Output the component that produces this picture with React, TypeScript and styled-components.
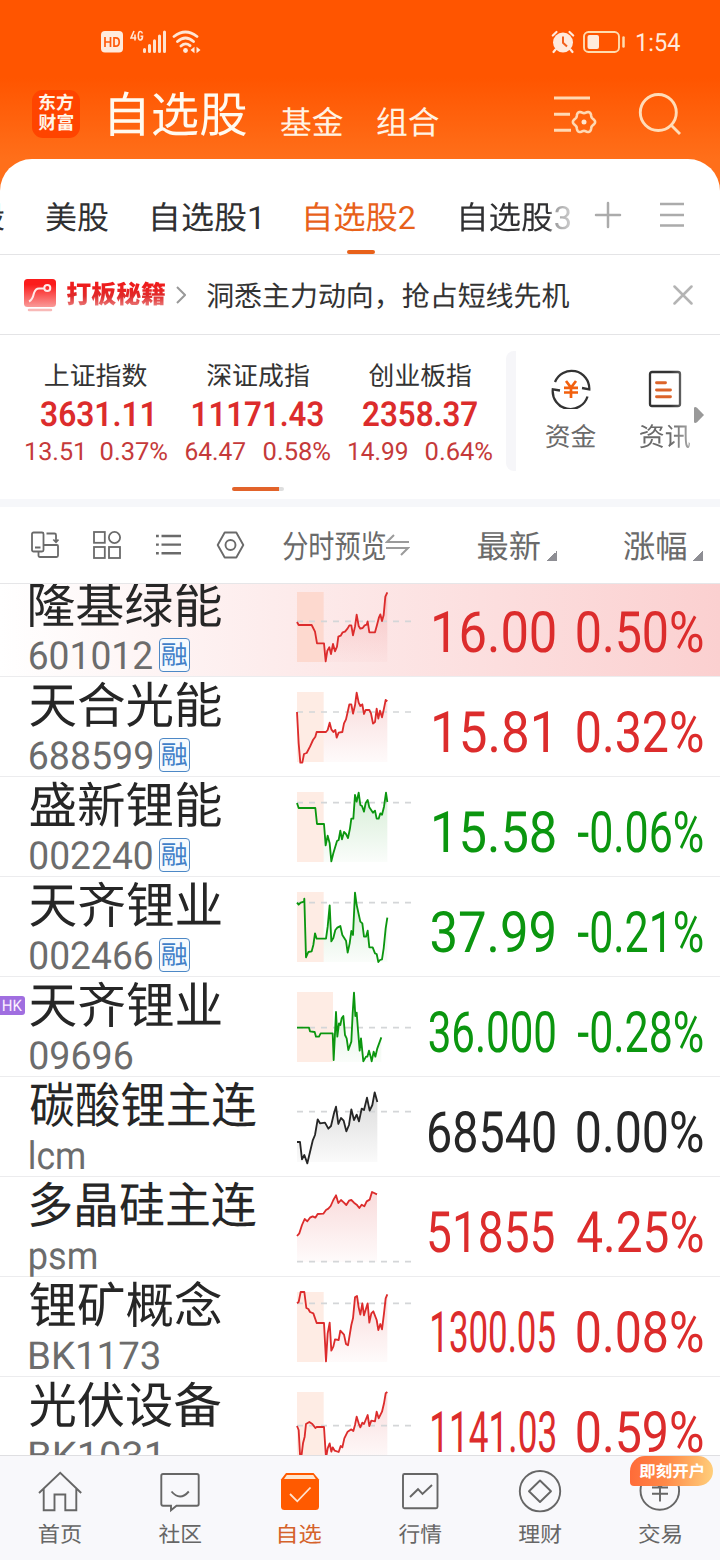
import React, { useLayoutEffect, useRef, useState } from "react";
import styled, { createGlobalStyle } from "styled-components";

const GlobalStyle = createGlobalStyle`
  * { box-sizing: border-box; }
  html, body { margin: 0; padding: 0; }
  body {
    width: 720px;
    background: #fff;
    font-family: Roboto, "Noto Sans CJK SC", sans-serif;
    text-rendering: geometricPrecision;
    overflow: hidden;
  }
  svg { display: block; flex: none; }
`;

/* ---------- text fitted to a column width ---------- */

const FitBox = styled.span<{ $w: number; $h: number; $size: number; $weight?: number; $color?: string }>`
  display: block;
  flex: none;
  width: ${(p) => p.$w}px;
  height: ${(p) => p.$h}px;
  line-height: ${(p) => p.$h}px;
  font-size: ${(p) => p.$size}px;
  font-weight: ${(p) => p.$weight ?? 400};
  color: ${(p) => p.$color ?? "inherit"};
  white-space: pre;
`;

const FitInner = styled.span`
  display: inline-block;
  transform-origin: 0 50%;
`;

type FitProps = {
  w: number;
  h: number;
  size: number;
  weight?: number;
  color?: string;
  className?: string;
  children: string;
};

/* Glyph bounds come back rounded, so they are measured at ten times the size. */
const MEASURE_SCALE = 10;

function Fit({ w, h, size, weight, color, className, children }: FitProps) {
  const ref = useRef<HTMLSpanElement>(null);
  const [transform, setTransform] = useState("none");
  useLayoutEffect(() => {
    const el = ref.current;
    const ctx = document.createElement("canvas").getContext("2d");
    if (!el || !ctx) return;
    const cs = getComputedStyle(el);
    ctx.font = `${cs.fontWeight} ${size * MEASURE_SCALE}px ${cs.fontFamily}`;
    const m = ctx.measureText(children);
    const left = m.actualBoundingBoxLeft / MEASURE_SCALE;
    const ink = left + m.actualBoundingBoxRight / MEASURE_SCALE;
    if (ink <= 0) return;
    const s = w / ink;
    setTransform(`translateX(${left * s}px) scaleX(${s})`);
  }, [children, w, size, weight]);
  return (
    <FitBox className={className} $w={w} $h={h} $size={size} $weight={weight} $color={color}>
      <FitInner ref={ref} style={{ transform }}>
        {children}
      </FitInner>
    </FitBox>
  );
}

/* ---------- header ---------- */

const Screen = styled.div`
  width: 720px;
  height: 1560px;
  display: flex;
  flex-direction: column;
  overflow: hidden;
  background: #fff;
`;

const Header = styled.header`
  height: 199px;
  flex: none;
  background: linear-gradient(180deg, #ff5500 0, #ff5500 78px, #ff6f1a 159px, #ff6f1a 199px);
  color: #fff3e4;
`;

const StatusBar = styled.div`
  height: 84px;
  padding: 0 40px 0 101px;
  display: flex;
  align-items: center;
`;

const Clock = styled(Fit)`
  margin-top: 3px;
`;

const Spacer = styled.div<{ $w?: number }>`
  flex: ${(p) => (p.$w === undefined ? "1" : "none")};
  width: ${(p) => p.$w ?? 0}px;
`;

const TitleBar = styled.div`
  height: 75px;
  padding: 0 38px 0 32px;
  display: flex;
  align-items: flex-start;
`;

const AppLogo = styled.div`
  width: 48px;
  height: 48px;
  margin: 6px 30px 0 0;
  padding: 4px 0 0 7px;
  border-radius: 11px;
  background: #ff4400;
  color: #fff6ea;
`;

const TitleText = styled(Fit)`
  margin-top: 2px;
`;

const SubTitle = styled(Fit)`
  margin: 16px 0 0 35px;
  & + & { margin-left: 34px; }
`;

const HeaderIcon = styled.div<{ $ml: number }>`
  margin: 9px 0 0 ${(p) => p.$ml}px;
`;

/* ---------- tabs ---------- */

const Sheet = styled.main`
  flex: 1;
  min-height: 0;
  margin-top: -40px;
  border-radius: 32px 32px 0 0;
  background: #fff;
  display: flex;
  flex-direction: column;
  overflow: hidden;
`;

const Tabs = styled.nav`
  height: 96px;
  flex: none;
  border-bottom: 1px solid #e4e4e6;
  display: flex;
  align-items: flex-start;
  color: #303032;
`;

const Tab = styled.div<{ $ml: number; $active?: boolean; $faded?: boolean }>`
  height: 95px;
  margin-left: ${(p) => p.$ml}px;
  padding-top: 37px;
  display: flex;
  flex-direction: column;
  align-items: center;
  justify-content: space-between;
  color: ${(p) => (p.$active ? "#e8611a" : "inherit")};
  ${(p) => p.$faded && "mask-image: linear-gradient(90deg, #000 80%, rgba(0,0,0,.5) 84%, rgba(0,0,0,.25) 100%);"}
  &::after {
    content: "";
    width: 28px;
    height: 4px;
    border-radius: 2px;
    background: ${(p) => (p.$active ? "#e8611a" : "transparent")};
  }
`;

const ClippedTab = styled.div`
  width: 4px;
  height: 80px;
  padding-top: 37px;
  overflow: hidden;
  display: flex;
  justify-content: flex-end;
`;

const TabIcon = styled.div<{ $ml: number }>`
  margin: 42px 0 0 ${(p) => p.$ml}px;
`;

/* ---------- promo ---------- */

const Promo = styled.section`
  height: 80px;
  flex: none;
  padding: 0 27px 0 24px;
  border-bottom: 1px solid #e4e4e6;
  display: flex;
  align-items: center;
  color: #333;
`;

const PromoBrand = styled(Fit)`
  margin: 2px 11px 0 11px;
  span {
    background: linear-gradient(180deg, #ee1c1c 20%, #e02a2a 50%, #ee9a9a 92%);
    background-clip: text;
    -webkit-background-clip: text;
    color: transparent;
  }
`;

const PromoText = styled(Fit)`
  margin-top: 5px;
`;

/* ---------- indices ---------- */

const Indices = styled.section`
  height: 164px;
  flex: none;
  display: flex;
  align-items: flex-start;
`;

const IndexPager = styled.div`
  width: 506px;
  padding: 28px 0 0 15px;
`;

const IndexList = styled.div`
  display: flex;
`;

const IndexCard = styled.div`
  width: 162px;
  display: flex;
  flex-direction: column;
  align-items: center;
`;

const IndexChange = styled.div`
  display: flex;
  gap: 19px;
`;

const PagerTrack = styled.div`
  width: 52px;
  height: 4px;
  margin: 20px 0 0 217px;
  border-radius: 2px;
  background: linear-gradient(90deg, #e2632a 47px, #dedede 47px);
`;

const Divider = styled.div`
  width: 10px;
  height: 120px;
  margin-top: 16px;
  border-radius: 8px 0 0 8px;
  background: #f6f6f9;
`;

const Shortcut = styled.div<{ $ml: number; $faded?: boolean }>`
  width: 50px;
  margin: 34px 0 0 ${(p) => p.$ml}px;
  display: flex;
  flex-direction: column;
  align-items: center;
  gap: 14px;
  color: #6a6a6a;
  ${(p) => p.$faded && "mask-image: linear-gradient(90deg, #000 60%, rgba(0,0,0,.6) 100%);"}
`;

const MoreArrow = styled.div`
  margin: 72px 0 0 4px;
`;

/* ---------- list ---------- */

const Gap = styled.div`
  height: 8px;
  flex: none;
  background: #f6f7fa;
`;

const Toolbar = styled.div`
  height: 77px;
  flex: none;
  padding-left: 31px;
  border-bottom: 1px solid #e6e6e8;
  display: flex;
  align-items: center;
  color: #6a6a6a;
`;

const ColumnLabel = styled(Fit)`
  margin-top: 3px;
`;

const SortMark = styled.i`
  width: 10px;
  height: 10px;
  margin: 21px 0 0 7px;
  background: linear-gradient(135deg, transparent 50%, #8e8e94 50%);
`;

const List = styled.div`
  flex: 1;
  min-height: 0;
  overflow: hidden;
  display: flex;
  flex-direction: column;
`;

const ListBody = styled.div`
  margin-top: -7px;
`;

const Row = styled.div<{ $hot?: boolean }>`
  position: relative;
  height: 100px;
  border-bottom: 1px solid #ececee;
  padding-left: 30px;
  display: flex;
  background: ${(p) => (p.$hot ? "linear-gradient(90deg, #fff 0, #fdecec 38%, #fbd0d0 100%)" : "#fff")};
`;

const NameCell = styled.div`
  width: 266px;
  padding-top: 1px;
`;

const CodeLine = styled.div`
  display: flex;
  align-items: flex-start;
  gap: 7px;
  color: #6c6c6c;
`;

const MarginBadge = styled.span`
  width: 31px;
  height: 34px;
  margin-top: 2px;
  padding: 0 0 0 2px;
  border: 1px solid #4d88c6;
  border-radius: 4px;
  background: #f5fafe;
`;

const MarketTag = styled.span`
  position: absolute;
  left: 0;
  top: 19px;
  width: 25px;
  height: 19px;
  padding: 0 0 0 3px;
  border-radius: 0 3px 3px 0;
  background: #a06ee0;
`;

const ChartCell = styled.div`
  width: 120px;
  padding-top: 13px;
`;

const ValueCell = styled.div<{ $w: number }>`
  width: ${(p) => p.$w}px;
  padding: 26px 0 0;
  display: flex;
  justify-content: flex-end;
`;

/* ---------- bottom nav ---------- */

const BottomNav = styled.nav`
  height: 105px;
  flex: none;
  border-top: 1px solid #dfdfe2;
  background: #f8f8fb;
  display: flex;
`;

const NavItem = styled.div<{ $active?: boolean }>`
  position: relative;
  width: 120px;
  padding-top: 14px;
  display: flex;
  flex-direction: column;
  align-items: center;
  gap: 8px;
  color: ${(p) => (p.$active ? "#d5622a" : "#666")};
`;

const OpenBadge = styled.span`
  position: absolute;
  left: 30px;
  top: 0;
  width: 83px;
  height: 30px;
  padding: 1px 0 0 10px;
  border-radius: 15px 15px 15px 4px;
  background: linear-gradient(95deg, #ff6a38 0%, #ff8a48 45%, #ffd07c 100%);
  color: #fff;
`;

/* ---------- data ---------- */

const RED = "#dc2c2c";
const GREEN = "#0b960f";
const INK = "#262626";

type Stock = {
  name: string;
  nameW: number;
  code: string;
  codeW: number;
  margin?: boolean;
  hk?: boolean;
  hot?: boolean;
  color: string;
  price: string;
  priceW: number;
  priceEnd: number;
  pct: string;
  pctW: number;
  base: number;
  shade: number;
  points: string;
};

const stocks: Stock[] = [
  {
    name: "隆基绿能", nameW: 191, code: "601012", codeW: 122, margin: true, hot: true, color: RED,
    price: "16.00", priceW: 121, priceEnd: 0, pct: "0.50%", pctW: 126, base: 88, shade: 80,
    points: "0,90 5,99 44,99 54,119 60,154 81,154 86,208 91,176 97,166 102,186 108,156 114,178 120,164 124,134 131,131 137,121 144,119 152,109 157,100 163,100 168,130 174,104 179,68 185,102 190,110 197,108 203,100 209,98 212,88 217,121 234,121 240,99 246,76 250,67 255,87 260,69 265,14 271,1",
  },
  {
    name: "天合光能", nameW: 191, code: "688599", codeW: 122, margin: true, color: RED,
    price: "15.81", priceW: 114, priceEnd: 7, pct: "0.32%", pctW: 126, base: 60, shade: 80,
    points: "0,60 5,154 10,212 16,212 21,186 29,183 39,164 48,144 55,134 59,120 87,120 92,114 98,92 103,112 109,120 115,114 119,137 125,122 136,120 141,94 147,82 152,60 157,37 163,37 168,65 174,40 179,2 185,32 190,42 196,37 201,66 206,54 217,54 222,64 228,95 234,90 239,50 244,80 249,56 255,76 261,49 266,24 271,28",
  },
  {
    name: "盛新锂能", nameW: 191, code: "002240", codeW: 122, margin: true, color: GREEN,
    price: "15.58", priceW: 121, priceEnd: 0, pct: "-0.06%", pctW: 125, base: 32, shade: 80,
    points: "0,33 5,48 55,48 60,96 81,96 86,160 92,131 98,154 103,208 109,184 120,147 125,144 130,116 135,142 141,120 147,126 153,138 159,109 163,80 169,80 174,9 179,29 185,2 190,39 195,42 201,59 206,33 212,24 217,46 228,62 234,56 239,80 245,80 250,64 255,68 261,44 267,2 271,30",
  },
  {
    name: "天齐锂业", nameW: 191, code: "002466", codeW: 122, margin: true, color: GREEN,
    price: "37.99", priceW: 123, priceEnd: 1, pct: "-0.21%", pctW: 125, base: 32, shade: 80,
    points: "0,32 5,38 11,32 21,29 22,20 27,196 34,180 44,178 49,159 54,124 59,140 87,140 92,104 98,40 103,148 109,138 115,114 121,107 130,102 136,129 147,146 152,182 158,154 163,117 168,129 174,2 179,39 190,89 196,94 201,134 207,134 212,116 217,166 227,166 234,184 239,186 244,210 249,204 255,202 260,169 266,109 271,77",
  },
  {
    name: "天齐锂业", nameW: 191, code: "09696", codeW: 102, hk: true, color: GREEN,
    price: "36.000", priceW: 126, priceEnd: 0, pct: "-0.28%", pctW: 125, base: 107, shade: 108,
    points: "0,107 36,107 39,118 53,120 57,134 66,134 71,124 107,124 110,204 114,124 117,60 121,134 126,94 130,99 134,79 139,72 144,129 149,139 154,174 163,149 167,64 171,2 175,72 179,62 183,114 188,176 192,139 199,208 207,194 211,194 216,176 221,194 224,208 230,179 235,194 241,169 253,136",
  },
  {
    name: "碳酸锂主连", nameW: 226, code: "lcm", codeW: 54, color: INK,
    price: "68540", priceW: 126, priceEnd: 0, pct: "0.00%", pctW: 126, base: 59, shade: 0,
    points: "0,150 9,150 15,202 22,189 31,214 47,146 54,129 62,82 69,94 84,92 94,110 102,102 111,64 117,44 124,96 132,78 140,86 148,118 156,99 163,52 171,84 179,68 186,88 194,50 201,54 210,17 218,56 226,39 233,1 241,30",
  },
  {
    name: "多晶硅主连", nameW: 226, code: "psm", codeW: 66, color: RED,
    price: "51855", priceW: 125, priceEnd: 1, pct: "4.25%", pctW: 126, base: 209, shade: 0,
    points: "0,132 7,124 15,99 23,81 31,88 39,77 47,73 55,77 62,66 79,65 87,54 94,50 101,42 109,24 117,10 124,33 132,24 140,31 148,39 156,26 163,24 171,32 179,38 187,48 194,38 202,43 209,28 218,23 225,0 240,7",
  },
  {
    name: "锂矿概念", nameW: 191, code: "BK1173", codeW: 129, color: RED,
    price: "1300.05", priceW: 123, priceEnd: 0, pct: "0.08%", pctW: 126, base: 34, shade: 80,
    points: "0,34 5,30 11,0 22,0 28,48 34,51 39,60 49,64 59,93 81,93 87,208 92,124 98,92 103,176 109,164 114,142 125,144 130,116 141,128 147,156 153,160 163,99 168,79 174,16 180,12 185,46 190,68 196,34 201,70 212,34 217,92 223,64 229,58 239,84 244,114 250,96 255,112 261,64 266,19 271,7",
  },
  {
    name: "光伏设备", nameW: 191, code: "BK1031", codeW: 128, color: RED,
    price: "1141.03", priceW: 123, priceEnd: 0, pct: "0.59%", pctW: 126, base: 101, shade: 80,
    points: "0,102 5,114 9,187 14,187 18,154 23,134 27,96 37,90 46,96 55,108 59,105 81,105 87,199 92,169 98,154 103,179 107,166 113,176 125,180 131,162 136,166 142,139 152,119 163,112 169,117 174,99 179,74 185,94 190,106 196,92 201,96 212,69 217,102 223,86 234,88 239,59 245,79 255,59 261,34 266,4 271,0",
  },
];

const indices = [
  { name: "上证指数", value: "3631.11", w: 111, a: "13.51", aw: 56, b: "0.37%", bw: 66 },
  { name: "深证成指", value: "11171.43", w: 130, a: "64.47", aw: 59, b: "0.58%", bw: 66 },
  { name: "创业板指", value: "2358.37", w: 114, a: "14.99", aw: 58, b: "0.64%", bw: 66 },
];

/* ---------- drawings ---------- */

function Sparkline({ stock, id }: { stock: Stock; id: string }) {
  const pts = stock.points.split(" ");
  const lastX = pts[pts.length - 1].split(",")[0];
  return (
    <svg width="120" height="76" viewBox="-3 -6 360 228">
      <defs>
        <linearGradient id={id} x1="0" y1="0" x2="0" y2="1">
          <stop offset="0" stopColor={stock.color} stopOpacity="0.17" />
          <stop offset="1" stopColor={stock.color} stopOpacity="0.02" />
        </linearGradient>
      </defs>
      <polygon points={`0,210 ${stock.points} ${lastX},210`} fill={`url(#${id})`} />
      {stock.shade > 0 && <rect width={stock.shade} height="210" fill={stock.hot ? "#fdd9cf" : "#feece4"} />}
      <path d={`M0 ${stock.base}H342`} stroke="#d4d6d8" strokeWidth="5" strokeDasharray="18 18" />
      <polyline points={stock.points} fill="none" stroke={stock.color} strokeWidth="5.5" strokeLinejoin="round" />
    </svg>
  );
}

const line = { fill: "none", stroke: "currentColor" } as const;

const gear = (cx: number, cy: number, r: number, amp: number, n: number) => {
  let d = "";
  for (let i = 0; i < 72; i++) {
    const t = (i / 72) * Math.PI * 2;
    const q = r + amp * Math.cos(n * t);
    d += `${i ? "L" : "M"}${(cx + q * Math.cos(t)).toFixed(2)} ${(cy + q * Math.sin(t)).toFixed(2)}`;
  }
  return d + "Z";
};

function StatusIcons() {
  return (
    <>
      <svg width="22" height="22" viewBox="0 0 22 22">
        <rect width="22" height="21.5" rx="4" fill="#ffeadc" />
        <path d="M4 6v10M9.500 6v10M4 11h5.500M13 6.800v8.400h1.800q3.400 0 3.400-4.200t-3.400-4.200z" fill="none" stroke="#ff5a0a" strokeWidth="1.700" />
      </svg>
      <Spacer $w={7} />
      <svg width="36" height="24" viewBox="0 0 36 24">
        <path d="M4 1L1 8h5.300M5 4.500v6M12.300 3.500Q12 1.500 10.300 1.500Q8.300 1.500 8.300 6Q8.300 10 10.300 10Q12.500 10 12.500 6.300H10.500" fill="none" stroke="#ffe6d4" strokeWidth="1.600" />
        <path d="M14.500 19.500v2M19.500 15.500v6M24.500 10.800v10.700M29.500 6v15.500M34.500 2v19.500" stroke="#ffe3cf" strokeWidth="3" strokeLinecap="round" fill="none" />
      </svg>
      <Spacer $w={6} />
      <svg width="30" height="24" viewBox="0 0 30 24">
        <g fill="none" stroke="#ffe6d4" strokeWidth="2.800" strokeLinecap="round">
          <path d="M2 6.500Q13.500-2.500 25 6.500M5.500 11.500Q13.500 4.500 21.500 11.500M9 16Q13.500 12 18 15.700" />
        </g>
        <circle cx="13.500" cy="20.500" r="2.400" fill="#ffeadc" />
        <path d="M18.500 20l4-3.200v6.400zM28.500 20l-4-3.200v6.400z" fill="#ffeadc" />
      </svg>
      <Spacer />
      <svg width="24" height="24" viewBox="0 0 24 24">
        <circle cx="12" cy="12.500" r="10" fill="#ffeadc" />
        <path d="M1.800 5.500L5.500 2M22.200 5.500L18.500 2M4.500 19.500L2.500 22M19.500 19.500l2 2.500" stroke="#ffeadc" strokeWidth="2.200" strokeLinecap="round" />
        <path d="M12 6.500v6.300l4 3.700" fill="none" stroke="#f2601c" strokeWidth="2" />
      </svg>
      <Spacer $w={8} />
      <svg width="42" height="22" viewBox="0 0 42 22">
        <rect x="1" y="1" width="35" height="20" rx="4.500" fill="none" stroke="#ffdcae" strokeWidth="1.900" />
        <rect x="4.500" y="4" width="11.500" height="14" rx="2" fill="#ffeadc" />
        <path d="M40.500 6.500v9" stroke="#ffdcae" strokeWidth="2.500" strokeLinecap="round" />
      </svg>
      <Spacer $w={12} />
    </>
  );
}

const navIcons = [
  <svg key="home" width="46" height="44" viewBox="0 0 46 44" {...line} strokeWidth="1.900">
    <path d="M2 23L23.200 2.800L44.200 23M6.700 19v21.200H17.500V24.500H28.300V40.200H39.300V19" />
  </svg>,
  <svg key="chat" width="46" height="44" viewBox="0 0 46 44" {...line} strokeWidth="1.900">
    <path d="M6 4H40q1.700 0 1.700 1.700V34q0 1.700-1.700 1.700H19.500L14 40.200V35.700H6q-1.700 0-1.700-1.700V5.700Q4.300 4 6 4z" />
    <path d="M14.500 21.500Q23 31.500 31.800 21.500" />
  </svg>,
  <svg key="fav" width="46" height="44" viewBox="0 0 46 44">
    <path d="M9 3H36.500L42 9.500V36.500Q42 40 38.500 40H7.500Q4 40 4 36.500V9.500z" fill="#ff5a00" />
    <path d="M9.800 5H36.200L38.800 9H7z" fill="#ffe6cf" />
    <path d="M13 24l7.300 7.300L33.500 17.500" fill="none" stroke="#ffe3cf" strokeWidth="1.800" />
  </svg>,
  <svg key="chart" width="46" height="44" viewBox="0 0 46 44" {...line} strokeWidth="1.900">
    <rect x="6" y="4" width="34.500" height="34.300" rx="1.500" />
    <path d="M13 27L21 19.200L25.500 24L35 15" />
  </svg>,
  <svg key="wealth" width="46" height="44" viewBox="0 0 46 44" {...line} strokeWidth="1.900">
    <circle cx="23" cy="21.200" r="20.200" />
    <path d="M23 10.500L34 21.200L23 32L12 21.200z" strokeLinejoin="round" />
  </svg>,
  <svg key="trade" width="46" height="44" viewBox="0 0 46 44" {...line} strokeWidth="1.900">
    <circle cx="22.800" cy="20.500" r="19.300" />
    <path d="M16 9l7 8.500L30 9M15 17.500h16M15 23.800h16M23 17.500V31.500" />
  </svg>,
];

const navItems = [
  { label: "首页" }, { label: "社区" }, { label: "自选" }, { label: "行情" }, { label: "理财" }, { label: "交易" },
];

/* ---------- page ---------- */

export default function App() {
  return (
    <Screen>
      <GlobalStyle />
      <Header>
        <StatusBar>
          <StatusIcons />
          <Clock w={43} h={24} size={25} color="#ffeadc">1:54</Clock>
        </StatusBar>
        <TitleBar>
          <AppLogo>
            <Fit w={34} h={20} size={18} weight={700}>东方</Fit>
            <Fit w={34} h={20} size={18} weight={700}>财富</Fit>
          </AppLogo>
          <TitleText w={136} h={60} size={48} color="#fffaf0">自选股</TitleText>
          <SubTitle w={62} h={46} size={32}>基金</SubTitle>
          <SubTitle w={62} h={46} size={32}>组合</SubTitle>
          <Spacer />
          <HeaderIcon $ml={0}>
            <svg width="44" height="44" viewBox="0 0 44 44" fill="none" stroke="#ffd9b4" strokeWidth="2.900">
              <path d="M1 5H37M1 21.200H17M1 37.200H18" />
              <path d={gear(31, 29, 10, 1.1, 6)} strokeWidth="2.600" />
              <circle cx="31" cy="29" r="2.500" fill="#ffe6cf" stroke="none" />
            </svg>
          </HeaderIcon>
          <HeaderIcon $ml={41}>
            <svg width="44" height="44" viewBox="0 0 44 44" fill="none" stroke="#ffdcb8" strokeWidth="2.900">
              <circle cx="20.300" cy="19.500" r="18" />
              <path d="M33 32L42 41" />
            </svg>
          </HeaderIcon>
        </TitleBar>
      </Header>

      <Sheet>
        <Tabs>
          <ClippedTab><Fit w={29} h={44} size={31}>股</Fit></ClippedTab>
          <Tab $ml={42}><Fit w={62} h={44} size={32}>美股</Fit></Tab>
          <Tab $ml={45}><Fit w={106} h={44} size={32}>自选股1</Fit></Tab>
          <Tab $ml={47} $active><Fit w={109} h={44} size={32}>自选股2</Fit></Tab>
          <Tab $ml={46} $faded><Fit w={109} h={44} size={32}>自选股3</Fit></Tab>
          <TabIcon $ml={24}>
            <svg width="28" height="28" viewBox="0 0 28 28" stroke="#ababab" strokeWidth="2.500" strokeLinecap="round">
              <path d="M2 14H26M14 2V26" />
            </svg>
          </TabIcon>
          <TabIcon $ml={37}>
            <svg width="26" height="28" viewBox="0 0 26 28" stroke="#ababab" strokeWidth="2.400">
              <path d="M1 3H25M1 14H25M1 24.500H25" />
            </svg>
          </TabIcon>
        </Tabs>

        <Promo>
          <svg width="32" height="36" viewBox="0 0 32 36">
            <defs>
              <linearGradient id="promo" x1="0" y1="0" x2="0" y2="1">
                <stop offset="0.200" stopColor="#fb1c1c" />
                <stop offset="1" stopColor="#f99a98" />
              </linearGradient>
            </defs>
            <rect y="2" width="32" height="28" rx="3.500" fill="url(#promo)" />
            <path d="M5 24.500Q8.500 23 10 16Q11.500 11.500 15 11.500H20" fill="none" stroke="#ffeaea" strokeWidth="2" />
            <circle cx="23.300" cy="11" r="3" fill="none" stroke="#ffeaea" strokeWidth="2" />
            <path d="M5 33H27" stroke="#f8b9b7" strokeWidth="2.500" strokeLinecap="round" />
          </svg>
          <PromoBrand w={98} h={34} size={25} weight={900}>打板秘籍</PromoBrand>
          <svg width="10" height="18" viewBox="0 0 10 18" fill="none" stroke="#999" strokeWidth="2">
            <path d="M1 1L9 9L1 17" />
          </svg>
          <Spacer $w={21} />
          <PromoText w={362} h={40} size={28}>洞悉主力动向，抢占短线先机</PromoText>
          <Spacer />
          <svg width="20" height="20" viewBox="0 0 20 20" stroke="#b4b4b4" strokeWidth="2.500" strokeLinecap="round">
            <path d="M1.500 1.500L18.500 18.500M18.500 1.500L1.500 18.500" />
          </svg>
        </Promo>

        <Indices>
          <IndexPager>
            <IndexList>
              {indices.map((it) => (
                <IndexCard key={it.name}>
                  <Fit w={102} h={29} size={26} color="#333">{it.name}</Fit>
                  <Fit w={it.w} h={47} size={34.5} weight={600} color={RED}>{it.value}</Fit>
                  <IndexChange>
                    <Fit w={it.aw} h={28} size={25} color="#c53a3a">{it.a}</Fit>
                    <Fit w={it.bw} h={28} size={25} color="#c53a3a">{it.b}</Fit>
                  </IndexChange>
                </IndexCard>
              ))}
            </IndexList>
            <PagerTrack />
          </IndexPager>
          <Divider />
          <Shortcut $ml={30}>
            <svg width="40" height="40" viewBox="0 0 40 40" fill="none" stroke="#333" strokeWidth="2.300">
              <path d="M4 13A17.800 17.800 0 0 1 38.300 20.300L31 19M36.500 27.500A17.800 17.800 0 0 1 1.800 20.300L9 21.500" />
              <path d="M15 12l5 6.500L25 12M13 18.800h14M13 23.500h14M20 18v11" stroke="#f2600e" strokeWidth="2.700" />
            </svg>
            <Fit w={50} h={30} size={26}>资金</Fit>
          </Shortcut>
          <Shortcut $ml={44} $faded>
            <svg width="40" height="40" viewBox="0 0 40 40" fill="none" stroke="#333" strokeWidth="2.300">
              <rect x="5" y="3" width="30" height="34" rx="2" />
              <path d="M11.500 13.800h9M11.500 21h14M11.500 27.800h14" stroke="#dc642a" strokeWidth="2.900" strokeLinecap="round" />
            </svg>
            <Fit w={50} h={30} size={26}>资讯</Fit>
          </Shortcut>
          <MoreArrow>
            <svg width="10" height="16" viewBox="0 0 10 16"><path d="M0 1Q0 0 1.500 0L3 .8L10 8L3 15.200L1.500 16Q0 16 0 15z" fill="#999" /></svg>
          </MoreArrow>
        </Indices>

        <Gap />

        <Toolbar>
          <svg width="28" height="28" viewBox="0 0 28 28" {...line} strokeWidth="1.800">
            <rect x="1" y="1.500" width="11.500" height="19" rx="1.500" />
            <path d="M4 16.500h5.500M12.500 14H26q1 0 1 1v9.500q0 1.500-1.500 1.500H9q-1.500 0-1.500-1.500V21M15.500 2.500h8q1.500 0 1.500 1.500v6.500M22.300 8.500L25 11.300l2.500-2.800" />
          </svg>
          <Spacer $w={34} />
          <svg width="28" height="28" viewBox="0 0 28 28" {...line} strokeWidth="1.800">
            <rect x="1" y="1" width="10.800" height="10.800" />
            <circle cx="21.500" cy="6.500" r="5.600" />
            <rect x="1" y="16" width="10.800" height="11" />
            <rect x="16" y="16" width="11" height="11" />
          </svg>
          <Spacer $w={35} />
          <svg width="26" height="26" viewBox="0 0 26 26" {...line} strokeWidth="2.400">
            <path d="M5.500 4H25M5.500 12.600H25M5.500 21.300H25M0 4H2.800M0 12.600H2.800M0 21.300H2.800" />
          </svg>
          <Spacer $w={34} />
          <svg width="29" height="28" viewBox="0 0 29 28" {...line} strokeWidth="1.900" strokeLinejoin="round">
            <path d="M8.700 1.500H20.300L27.300 14L20.300 26.500H8.700L1.700 14z" />
            <circle cx="14.500" cy="14" r="5" />
          </svg>
          <Spacer $w={38} />
          <ColumnLabel w={102} h={44} size={32}>分时预览</ColumnLabel>
          <svg width="25" height="24" viewBox="0 0 25 24" fill="none" stroke="#9b9b9b" strokeWidth="2">
            <path d="M24 9H2L9 2M1 15H23L16 22" />
          </svg>
          <Spacer $w={68} />
          <ColumnLabel w={62} h={44} size={32}>最新</ColumnLabel>
          <SortMark />
          <Spacer $w={67} />
          <ColumnLabel w={62} h={44} size={32}>涨幅</ColumnLabel>
          <SortMark />
        </Toolbar>

        <List>
          <ListBody>
            {stocks.map((s) => (
              <Row key={s.code} $hot={s.hot}>
                {s.hk && (
                  <MarketTag><Fit w={19} h={19} size={16} color="#fbefff">HK</Fit></MarketTag>
                )}
                <NameCell>
                  <Fit w={s.nameW} h={58} size={49} color="#262626">{s.name}</Fit>
                  <CodeLine>
                    <Fit w={s.codeW} h={41} size={38.5}>{s.code}</Fit>
                    {s.margin && (
                      <MarginBadge><Fit w={25} h={35} size={26} color="#3f80c8">融</Fit></MarginBadge>
                    )}
                  </CodeLine>
                </NameCell>
                <ChartCell><Sparkline stock={s} id={`fill-${s.code}`} /></ChartCell>
                <ValueCell $w={139 - s.priceEnd}>
                  <Fit w={s.priceW} h={60} size={57} color={s.color}>{s.price}</Fit>
                </ValueCell>
                <ValueCell $w={148 + s.priceEnd}>
                  <Fit w={s.pctW} h={60} size={57} color={s.color}>{s.pct}</Fit>
                </ValueCell>
              </Row>
            ))}
          </ListBody>
        </List>
      </Sheet>

      <BottomNav>
        {navItems.map((n, i) => (
          <NavItem key={n.label} $active={i === 2}>
            {navIcons[i]}
            <Fit w={42} h={28} size={21.5}>{n.label}</Fit>
            {i === 5 && (
              <OpenBadge><Fit w={63} h={30} size={16} weight={700}>即刻开户</Fit></OpenBadge>
            )}
          </NavItem>
        ))}
      </BottomNav>
    </Screen>
  );
}
